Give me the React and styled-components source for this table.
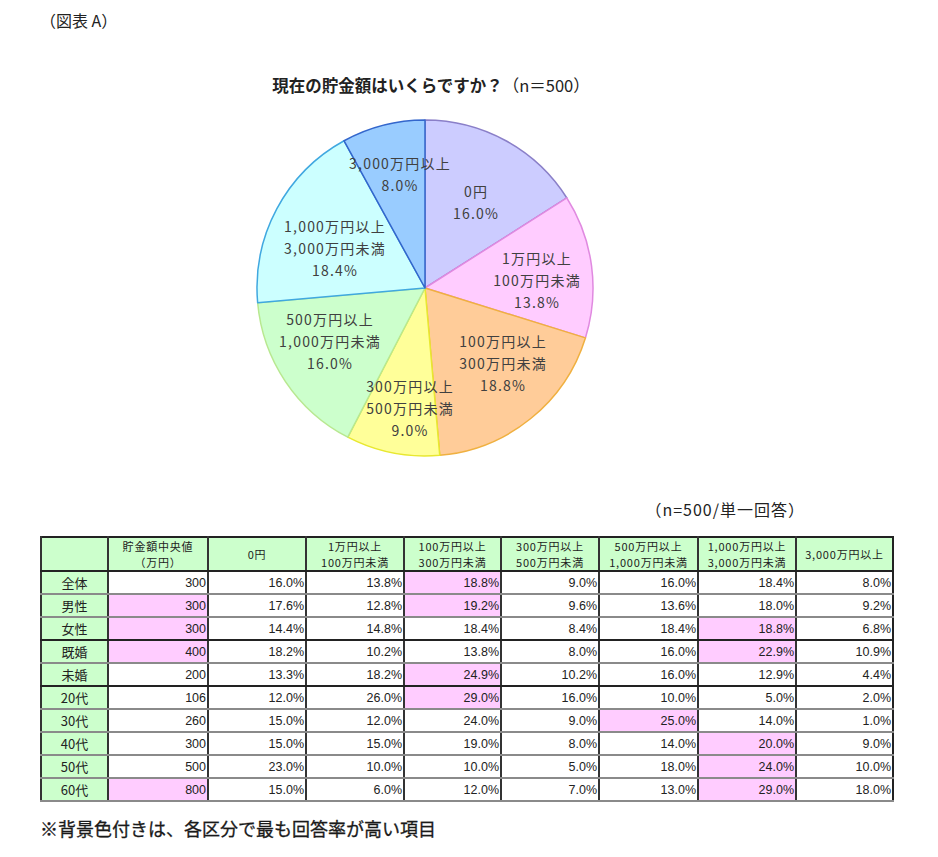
import React from 'react';
import styled, { createGlobalStyle } from 'styled-components';

const GlobalStyle = createGlobalStyle`
  body {
    margin: 0;
    background: #ffffff;
    font-family: "Noto Sans CJK JP", "Noto Sans", sans-serif;
    color: #222;
  }
`;

const Page = styled.div`
  width: 938px;
  height: 857px;
  padding: 8px 0 0 40px;
  box-sizing: border-box;
  overflow: hidden;
`;

const Caption = styled.div`
  font-size: 16px;
  line-height: 24px;
  color: #222;
`;

const ChartBlock = styled.div`
  width: 782px;
  display: flex;
  flex-direction: column;
  align-items: center;
  margin-top: 41px;
`;

const ChartTitle = styled.div`
  font-size: 16.5px;
  line-height: 24px;
  color: #222;
  white-space: nowrap;

  b {
    font-weight: 700;
  }
`;

const PieSvg = styled.svg`
  display: block;
  margin-top: 22px;
  font-family: "Noto Sans CJK JP", "Noto Sans", sans-serif;
`;

const SampleNote = styled.div`
  width: 852px;
  box-sizing: border-box;
  padding-right: 87px;
  margin-top: 38px;
  text-align: right;
  font-size: 16px;
  letter-spacing: 1px;
  line-height: 24px;
  color: #222;
`;

const Table = styled.table`
  margin-top: 15px;
  width: 852px;
  border-collapse: collapse;
  table-layout: fixed;
  border: 2px solid #222;
  font-size: 12px;
  color: #222;
`;

const HeadCell = styled.th`
  background: #ccffcc;
  font-weight: normal;
  font-size: 11px;
  letter-spacing: 0.8px;
  line-height: 16px;
  height: 32px;
  padding: 0;
  text-align: center;
  border-left: 2px solid #333;
  border-bottom: 2px solid #222;
  white-space: nowrap;

  div {
    line-height: 16px;
    height: 16px;
  }
`;

const Row = styled.tr`
  height: 23px;

  td, th {
    border-bottom: 2px solid ${p => (p.$strong ? '#222' : '#8a8a8a')};
  }
`;

const RowLabel = styled.th`
  background: #ccffcc;
  font-weight: normal;
  font-size: 13px;
  text-align: center;
  padding: 0;
  border-left: 2px solid #333;
`;

const Cell = styled.td`
  background: ${p => (p.$hl ? '#ffccff' : '#ffffff')};
  text-align: right;
  padding: 0 1px 0 0;
  font-family: "Liberation Sans", Arial, sans-serif;
  font-size: 12.5px;
  border-left: 2px solid #333;
`;

const Footnote = styled.div`
  margin-top: 14px;
  font-size: 18px;
  line-height: 24px;
  font-weight: 400;
  color: #1a1a1a;
  -webkit-text-stroke: 0.3px #1a1a1a;
`;

const slices = [
  { v: 16.0, fill: '#ccccff', stroke: '#8a7fc8', lines: ['0円', '16.0%'], x: 476, y: 190 },
  { v: 13.8, fill: '#ffccff', stroke: '#e08ae0', lines: ['1万円以上', '100万円未満', '13.8%'], x: 537, y: 257 },
  { v: 18.8, fill: '#ffcc99', stroke: '#f0b040', lines: ['100万円以上', '300万円未満', '18.8%'], x: 503, y: 340 },
  { v: 9.0, fill: '#ffff99', stroke: '#e8e830', lines: ['300万円以上', '500万円未満', '9.0%'], x: 410, y: 385 },
  { v: 16.0, fill: '#ccffcc', stroke: '#b8e890', lines: ['500万円以上', '1,000万円未満', '16.0%'], x: 330, y: 318 },
  { v: 18.4, fill: '#ccffff', stroke: '#40a8e0', lines: ['1,000万円以上', '3,000万円未満', '18.4%'], x: 335, y: 225 },
  { v: 8.0, fill: '#99ccff', stroke: '#3366cc', lines: ['3,000万円以上', '8.0%'], x: 400, y: 162 },
];

// label coordinates above are page pixels; the svg's top-left sits at about (255, 117)
const OX = 255;
const OY = 117;
const CX = 170;
const CY = 169;
const R = 168;

function point(frac) {
  const a = frac * Math.PI * 2;
  return [CX + R * Math.sin(a), CY - R * Math.cos(a)];
}

function Pie() {
  let acc = 0;
  const paths = slices.map((s, i) => {
    const start = acc / 100;
    acc += s.v;
    const end = acc / 100;
    const [x1, y1] = point(start);
    const [x2, y2] = point(end);
    const large = end - start > 0.5 ? 1 : 0;
    const d = `M${CX},${CY} L${x1},${y1} A${R},${R} 0 ${large} 1 ${x2},${y2} Z`;
    return <path key={i} d={d} fill={s.fill} stroke={s.stroke} strokeWidth="1.5" strokeLinejoin="round" />;
  });

  return (
    <PieSvg width="352" height="340" viewBox="0 0 352 340">
      {paths}
      {slices.map((s, i) => (
        <text
          key={i}
          x={s.x - OX}
          y={s.y - OY}
          textAnchor="middle"
          fontSize="14"
          fill="#404040"
          letterSpacing="1.2"
        >
          {s.lines.map((l, j) => (
            <tspan key={j} x={s.x - OX} dy={j === 0 ? 5 : 22}>{l}</tspan>
          ))}
        </text>
      ))}
    </PieSvg>
  );
}

const headers = [
  '',
  ['貯金額中央値', '（万円）'],
  ['0円'],
  ['1万円以上', '100万円未満'],
  ['100万円以上', '300万円未満'],
  ['300万円以上', '500万円未満'],
  ['500万円以上', '1,000万円未満'],
  ['1,000万円以上', '3,000万円未満'],
  ['3,000万円以上'],
];

const widths = [67, 100, 98, 98, 97, 98, 99, 98, 97];

// [label, values, highlighted value indexes (0 = median), strong bottom border]
const rows = [
  ['全体', ['300', '16.0%', '13.8%', '18.8%', '9.0%', '16.0%', '18.4%', '8.0%'], [3], false],
  ['男性', ['300', '17.6%', '12.8%', '19.2%', '9.6%', '13.6%', '18.0%', '9.2%'], [0, 3], false],
  ['女性', ['300', '14.4%', '14.8%', '18.4%', '8.4%', '18.4%', '18.8%', '6.8%'], [0, 6], true],
  ['既婚', ['400', '18.2%', '10.2%', '13.8%', '8.0%', '16.0%', '22.9%', '10.9%'], [0, 6], false],
  ['未婚', ['200', '13.3%', '18.2%', '24.9%', '10.2%', '16.0%', '12.9%', '4.4%'], [3], true],
  ['20代', ['106', '12.0%', '26.0%', '29.0%', '16.0%', '10.0%', '5.0%', '2.0%'], [3], false],
  ['30代', ['260', '15.0%', '12.0%', '24.0%', '9.0%', '25.0%', '14.0%', '1.0%'], [5], false],
  ['40代', ['300', '15.0%', '15.0%', '19.0%', '8.0%', '14.0%', '20.0%', '9.0%'], [6], false],
  ['50代', ['500', '23.0%', '10.0%', '10.0%', '5.0%', '18.0%', '24.0%', '10.0%'], [6], false],
  ['60代', ['800', '15.0%', '6.0%', '12.0%', '7.0%', '13.0%', '29.0%', '18.0%'], [0, 6], false],
];

export default function App() {
  return (
    <Page>
      <GlobalStyle />
      <Caption>（図表 A）</Caption>
      <ChartBlock>
        <ChartTitle>
          <b>現在の貯金額はいくらですか？</b>（n＝500）
        </ChartTitle>
        <Pie />
      </ChartBlock>
      <SampleNote>（n=500/単一回答）</SampleNote>
      <Table>
        <colgroup>
          {widths.map((w, i) => <col key={i} style={{ width: w }} />)}
        </colgroup>
        <thead>
          <tr>
            {headers.map((h, i) => (
              <HeadCell key={i}>
                {Array.isArray(h) ? h.map((l, j) => <div key={j}>{l}</div>) : h}
              </HeadCell>
            ))}
          </tr>
        </thead>
        <tbody>
          {rows.map(([label, vals, hl, strong]) => (
            <Row key={label} $strong={strong}>
              <RowLabel>{label}</RowLabel>
              {vals.map((v, i) => (
                <Cell key={i} $hl={hl.includes(i)}>{v}</Cell>
              ))}
            </Row>
          ))}
        </tbody>
      </Table>
      <Footnote>※背景色付きは、各区分で最も回答率が高い項目</Footnote>
    </Page>
  );
}
